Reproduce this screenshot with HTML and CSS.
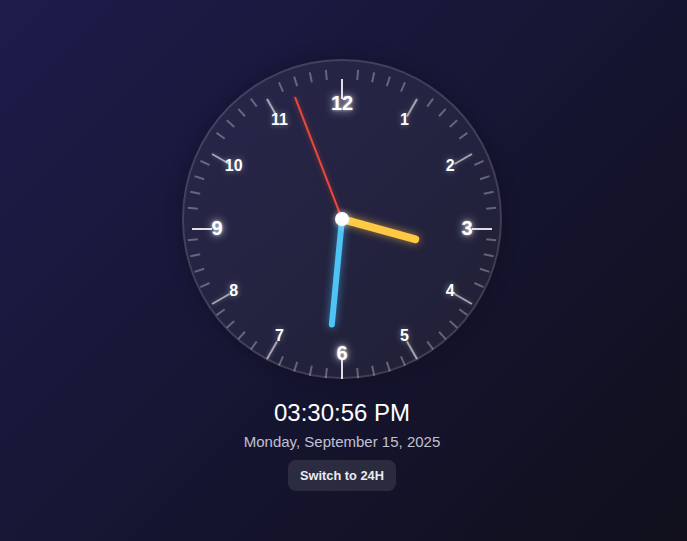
FILE: index.html
```html
<!DOCTYPE html>
<html lang="en">
<head>
<meta charset="utf-8">
<title>Analog Clock</title>
<link rel="stylesheet" href="styles.css">
</head>
<body>
<main class="app">
  <div class="face">
    <div class="tick main" style="--a:0deg"></div>
    <div class="tick" style="--a:6deg"></div>
    <div class="tick" style="--a:12deg"></div>
    <div class="tick" style="--a:18deg"></div>
    <div class="tick" style="--a:24deg"></div>
    <div class="tick hour" style="--a:30deg"></div>
    <div class="tick" style="--a:36deg"></div>
    <div class="tick" style="--a:42deg"></div>
    <div class="tick" style="--a:48deg"></div>
    <div class="tick" style="--a:54deg"></div>
    <div class="tick hour" style="--a:60deg"></div>
    <div class="tick" style="--a:66deg"></div>
    <div class="tick" style="--a:72deg"></div>
    <div class="tick" style="--a:78deg"></div>
    <div class="tick" style="--a:84deg"></div>
    <div class="tick main" style="--a:90deg"></div>
    <div class="tick" style="--a:96deg"></div>
    <div class="tick" style="--a:102deg"></div>
    <div class="tick" style="--a:108deg"></div>
    <div class="tick" style="--a:114deg"></div>
    <div class="tick hour" style="--a:120deg"></div>
    <div class="tick" style="--a:126deg"></div>
    <div class="tick" style="--a:132deg"></div>
    <div class="tick" style="--a:138deg"></div>
    <div class="tick" style="--a:144deg"></div>
    <div class="tick hour" style="--a:150deg"></div>
    <div class="tick" style="--a:156deg"></div>
    <div class="tick" style="--a:162deg"></div>
    <div class="tick" style="--a:168deg"></div>
    <div class="tick" style="--a:174deg"></div>
    <div class="tick main" style="--a:180deg"></div>
    <div class="tick" style="--a:186deg"></div>
    <div class="tick" style="--a:192deg"></div>
    <div class="tick" style="--a:198deg"></div>
    <div class="tick" style="--a:204deg"></div>
    <div class="tick hour" style="--a:210deg"></div>
    <div class="tick" style="--a:216deg"></div>
    <div class="tick" style="--a:222deg"></div>
    <div class="tick" style="--a:228deg"></div>
    <div class="tick" style="--a:234deg"></div>
    <div class="tick hour" style="--a:240deg"></div>
    <div class="tick" style="--a:246deg"></div>
    <div class="tick" style="--a:252deg"></div>
    <div class="tick" style="--a:258deg"></div>
    <div class="tick" style="--a:264deg"></div>
    <div class="tick main" style="--a:270deg"></div>
    <div class="tick" style="--a:276deg"></div>
    <div class="tick" style="--a:282deg"></div>
    <div class="tick" style="--a:288deg"></div>
    <div class="tick" style="--a:294deg"></div>
    <div class="tick hour" style="--a:300deg"></div>
    <div class="tick" style="--a:306deg"></div>
    <div class="tick" style="--a:312deg"></div>
    <div class="tick" style="--a:318deg"></div>
    <div class="tick" style="--a:324deg"></div>
    <div class="tick hour" style="--a:330deg"></div>
    <div class="tick" style="--a:336deg"></div>
    <div class="tick" style="--a:342deg"></div>
    <div class="tick" style="--a:348deg"></div>
    <div class="tick" style="--a:354deg"></div>

    <div class="num main" style="--a:0deg">12</div>
    <div class="num" style="--a:30deg">1</div>
    <div class="num" style="--a:60deg">2</div>
    <div class="num main" style="--a:90deg">3</div>
    <div class="num" style="--a:120deg">4</div>
    <div class="num" style="--a:150deg">5</div>
    <div class="num main" style="--a:180deg">6</div>
    <div class="num" style="--a:210deg">7</div>
    <div class="num" style="--a:240deg">8</div>
    <div class="num main" style="--a:270deg">9</div>
    <div class="num" style="--a:300deg">10</div>
    <div class="num" style="--a:330deg">11</div>

    <div class="hand hour-hand" style="--a:105.45deg"></div>
    <div class="hand minute-hand" style="--a:185.5deg"></div>
    <div class="hand second-hand" style="--a:338.9deg"></div>
    <div class="pivot"></div>
  </div>

  <div class="time">03:30:56 PM</div>
  <div class="date">Monday, September 15, 2025</div>
  <button class="toggle" type="button">Switch to 24H</button>
</main>
</body>
</html>
```

FILE: styles.css
```css
* { box-sizing: border-box; }

html, body {
  margin: 0;
  height: 100%;
}

body {
  background: linear-gradient(135deg, #1d1c4b 0%, #100f1b 100%);
  font-family: "Liberation Sans", Arial, sans-serif;
  color: #fff;
  overflow: hidden;
}

.app {
  display: flex;
  flex-direction: column;
  align-items: center;
  padding-top: 59px;
  padding-right: 3px;
}

.face {
  position: relative;
  width: 320px;
  height: 320px;
  border-radius: 50%;
  background: rgba(255, 255, 255, 0.06);
  box-shadow: inset 0 0 0 2px rgba(255, 255, 255, 0.13), 0 0 18px rgba(0, 0, 0, 0.25);
}

.tick {
  position: absolute;
  left: 159px;
  top: 160px;
  width: 2px;
  height: 10px;
  background: rgba(255, 255, 255, 0.3);
  transform: rotate(var(--a)) translateY(-150px);
}

.tick.hour,
.tick.main {
  height: 20px;
  transform: rotate(var(--a)) translateY(-140px);
}

.tick.hour {
  background: rgba(255, 255, 255, 0.6);
  box-shadow: 0 0 4px rgba(255, 255, 255, 0.25);
}

.tick.main {
  background: rgba(255, 255, 255, 0.85);
}

.num {
  position: absolute;
  left: 160px;
  top: 169px;
  white-space: nowrap;
  font-size: 16px;
  font-weight: bold;
  line-height: 1;
  color: #fff;
  text-shadow: 0 0 6px rgba(255, 255, 255, 0.45);
  transform: translate(-50%, -50%) rotate(var(--a)) translateY(-125px) rotate(calc(-1 * var(--a)));
}

.num.main {
  font-size: 20px;
  text-shadow: 0 0 8px rgba(255, 255, 255, 0.85), 0 0 3px rgba(255, 255, 255, 0.6);
}

.hand {
  position: absolute;
  transform-origin: 50% 100%;
  transform: rotate(var(--a));
}

.hour-hand {
  left: 156px;
  top: 80px;
  width: 8px;
  height: 80px;
  border-radius: 4px;
  background: #ffc943;
  box-shadow: 0 0 8px rgba(255, 201, 67, 0.6);
}

.minute-hand {
  left: 157px;
  top: 51px;
  width: 6px;
  height: 109px;
  border-radius: 3px;
  background: #4ec3f5;
  box-shadow: 0 0 8px rgba(78, 195, 245, 0.6);
}

.second-hand {
  left: 159px;
  top: 29px;
  width: 2px;
  height: 131px;
  border-radius: 1px;
  background: #e8493a;
  box-shadow: 0 0 5px rgba(232, 73, 58, 0.5);
}

.pivot {
  position: absolute;
  left: 153px;
  top: 153px;
  width: 14px;
  height: 14px;
  border-radius: 50%;
  background: #fff;
  box-shadow: 0 0 6px rgba(255, 255, 255, 0.6);
}

.time {
  margin-top: 20px;
  font-size: 24px;
  color: #fff;
}

.date {
  margin-top: 6px;
  font-size: 15px;
  color: rgba(232, 234, 250, 0.82);
}

.toggle {
  margin-top: 10px;
  padding: 8px 12px;
  border: none;
  border-radius: 8px;
  background: rgba(255, 255, 255, 0.1);
  color: #ececf2;
  font-family: "Liberation Sans", Arial, sans-serif;
  font-size: 12.8px;
  font-weight: bold;
  line-height: 15px;
}
```
